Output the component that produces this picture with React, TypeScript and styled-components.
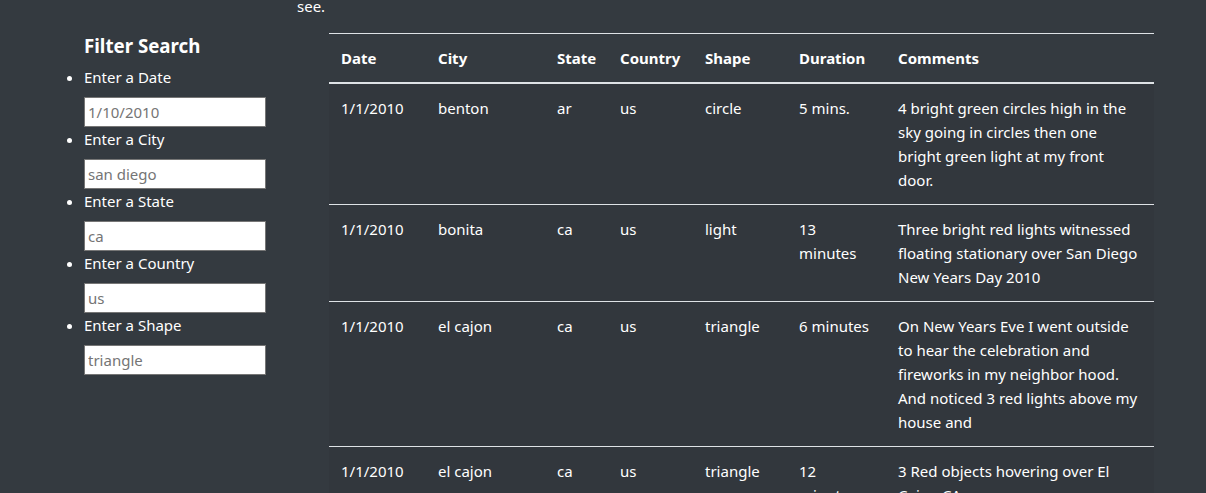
import React from "react";
import styled, { createGlobalStyle } from "styled-components";

const Global = createGlobalStyle`
  html, body { margin: 0; padding: 0; }
  body {
    background: #343a40;
    color: #fff;
    font-family: "Noto Sans", "Open Sans", Lato, "Liberation Sans", sans-serif;
    font-size: 15px;
    line-height: 24px;
    overflow: hidden;
  }
`;

const Page = styled.div`
  display: grid;
  grid-template-columns: 297px 1fr;
  height: 493px;
  overflow: hidden;
`;

const Sidebar = styled.aside`
  padding: 34px 0 0 84px;
`;

const Heading = styled.h5`
  margin: 0 0 7px;
  font-size: 18.7px;
  line-height: 24px;
  font-weight: 700;
`;

const FilterList = styled.ul`
  margin: 0;
  padding: 0;
  list-style: disc outside;
`;

const FilterItem = styled.li`
  display: list-item;
`;

const Label = styled.label`
  display: block;
  line-height: 24px;
`;

const Input = styled.input`
  display: block;
  box-sizing: border-box;
  width: 182px;
  height: 30px;
  margin: 8px 0 0;
  padding: 0 3px;
  border: 1px solid #767676;
  background: #fff;
  font-family: inherit;
  font-size: 15px;
  color: #757575;
  &::placeholder { color: #757575; opacity: 1; }
  outline: none;
`;

const Main = styled.main`
  display: flex;
  flex-direction: column;
`;

const Intro = styled.p`
  margin: -6px 0 15px;
`;

const Table = styled.table`
  margin-left: 32px;
  width: 825px;
  border-collapse: collapse;
  table-layout: fixed;
  color: #fff;
`;

const Th = styled.th<{ $w: number }>`
  box-sizing: border-box;
  width: ${(p) => p.$w}px;
  text-align: left;
  padding: 12px;
  font-weight: 700;
  vertical-align: bottom;
  border-top: 1px solid #dee2e6;
  border-bottom: 2px solid #dee2e6;
`;

const Tr = styled.tr`
  background: #32373d;
`;

const Td = styled.td`
  padding: 12px;
  vertical-align: top;
  border-bottom: 1px solid #dee2e6;
`;

const columns: [string, number][] = [
  ["Date", 97],
  ["City", 119],
  ["State", 63],
  ["Country", 85],
  ["Shape", 94],
  ["Duration", 99],
  ["Comments", 268],
];

const rows = [
  ["1/1/2010", "benton", "ar", "us", "circle", "5 mins.", "4 bright green circles high in the sky going in circles then one bright green light at my front door."],
  ["1/1/2010", "bonita", "ca", "us", "light", "13 minutes", "Three bright red lights witnessed floating stationary over San Diego New Years Day 2010"],
  ["1/1/2010", "el cajon", "ca", "us", "triangle", "6 minutes", "On New Years Eve I went outside to hear the celebration and fireworks in my neighbor hood. And noticed 3 red lights above my house and"],
  ["1/1/2010", "el cajon", "ca", "us", "triangle", "12 minutes", "3 Red objects hovering over El Cajon CA"],
];

const filters = [
  ["Enter a Date", "1/10/2010"],
  ["Enter a City", "san diego"],
  ["Enter a State", "ca"],
  ["Enter a Country", "us"],
  ["Enter a Shape", "triangle"],
];

export default function App() {
  return (
    <>
      <Global />
      <Page>
        <Sidebar>
          <Heading>Filter Search</Heading>
          <FilterList>
            {filters.map(([label, ph]) => (
              <FilterItem key={label}>
                <Label>{label}</Label>
                <Input type="text" placeholder={ph} />
              </FilterItem>
            ))}
          </FilterList>
        </Sidebar>
        <Main>
          <Intro>see.</Intro>
          <Table>
            <thead>
              <tr>
                {columns.map(([c, w]) => (
                  <Th key={c} $w={w}>{c}</Th>
                ))}
              </tr>
            </thead>
            <tbody>
              {rows.map((r, i) => (
                <Tr key={i}>
                  {r.map((cell, j) => (
                    <Td key={j}>{cell}</Td>
                  ))}
                </Tr>
              ))}
            </tbody>
          </Table>
        </Main>
      </Page>
    </>
  );
}
